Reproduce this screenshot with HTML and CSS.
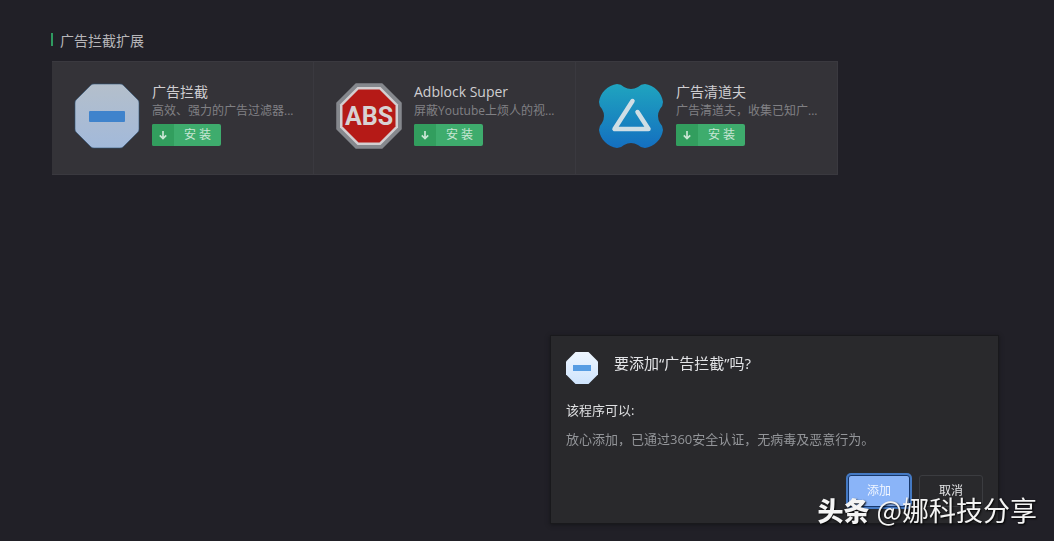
FILE: index.html
```html
<!DOCTYPE html>
<html lang="zh-CN">
<head>
<meta charset="utf-8">
<title>广告拦截扩展</title>
<link rel="stylesheet" href="styles.css">
</head>
<body>
<svg class="defs" aria-hidden="true">
  <defs>
    <linearGradient id="pale" x1="0" y1="0" x2="0" y2="1"><stop offset="0" stop-color="#b4bfcb"/><stop offset="1" stop-color="#a2b9da"/></linearGradient>
    <linearGradient id="bright" x1="0" y1="0" x2="0" y2="1"><stop offset="0" stop-color="#eef6ff"/><stop offset="1" stop-color="#cfe4fd"/></linearGradient>
    <linearGradient id="sea" x1="0" y1="0" x2="0" y2="1"><stop offset="0" stop-color="#1fa4bf"/><stop offset="1" stop-color="#146fc0"/></linearGradient>
    <symbol id="arrow" viewBox="0 0 10 10"><path d="M5 1V8.4M1.8 5.3L5 8.5L8.2 5.3" fill="none" stroke="currentColor" stroke-width="1.7"/></symbol>
  </defs>
</svg>
<main class="page">
  <h1 class="heading">广告拦截扩展</h1>
  <ul class="cards">
    <li class="card">
      <svg class="logo" viewBox="0 0 66 66" aria-hidden="true">
        <path d="M20 1H46Q48 1 49 2L64 17Q65 18 65 20V46Q65 48 64 49L49 64Q48 65 46 65H20Q18 65 17 64L2 49Q1 48 1 46V20Q1 18 2 17L17 2Q18 1 20 1Z" fill="url(#pale)" stroke="#315477" stroke-width=".6"/>
        <rect x="15" y="28" width="36" height="11" rx="1" fill="#3f83cc"/>
      </svg>
      <div class="info">
        <h2 class="name">广告拦截</h2>
        <p class="desc">高效、强力的广告过滤器...</p>
        <button class="install" type="button"><span class="tab"><svg class="arrow"><use href="#arrow"/></svg></span><span class="label">安 装</span></button>
      </div>
    </li>
    <li class="card">
      <svg class="logo" viewBox="0 0 66 66" aria-hidden="true">
        <path d="M20 1H46L65 20V46L46 65H20L1 46V20Z" fill="#85888d" stroke="#85888d" stroke-width="1.5" stroke-linejoin="round"/>
        <path d="M21.500 4H44.500L62 21.500V44.500L44.500 62H21.500L4 44.500V21.500Z" fill="#d3cfd1"/>
        <path d="M22.500 6.500H43.500L59.500 22.500V43.500L43.500 59.500H22.500L6.500 43.500V22.500Z" fill="#b51a17"/>
        <text class="abs" x="33" y="42" text-anchor="middle">ABS</text>
      </svg>
      <div class="info">
        <h2 class="name">Adblock Super</h2>
        <p class="desc">屏蔽Youtube上烦人的视...</p>
        <button class="install" type="button"><span class="tab"><svg class="arrow"><use href="#arrow"/></svg></span><span class="label">安 装</span></button>
      </div>
    </li>
    <li class="card">
      <svg class="logo" viewBox="0 0 66 66" aria-hidden="true">
        <path d="M19 1Q23 1 26 4Q33 8 40 4Q43 1 47 1C56 2 64 10 65 19Q65 23 62 26Q58 33 62 40Q65 43 65 47C64 56 56 64 47 65Q43 65 40 62Q33 58 26 62Q23 65 19 65C10 64 2 56 1 47Q1 43 4 40Q8 33 4 26Q1 23 1 19C2 10 10 2 19 1Z" fill="url(#sea)"/>
        <path d="M34.500 18L16.500 46H50.500L39.500 29" fill="none" stroke="#cfdee5" stroke-width="4.500" stroke-linejoin="round" stroke-linecap="round"/>
      </svg>
      <div class="info">
        <h2 class="name">广告清道夫</h2>
        <p class="desc">广告清道夫，收集已知广...</p>
        <button class="install" type="button"><span class="tab"><svg class="arrow"><use href="#arrow"/></svg></span><span class="label">安 装</span></button>
      </div>
    </li>
  </ul>
</main>
<section class="dialog" role="dialog" aria-labelledby="ask">
  <header class="dialog-head">
    <svg class="dialog-logo" viewBox="0 0 32 32" aria-hidden="true">
      <path d="M9.500 0H22.500L32 9.500V22.500L22.500 32H9.500L0 22.500V9.500Z" fill="url(#bright)"/>
      <rect x="7" y="13" width="18" height="6" fill="#579de3"/>
    </svg>
    <h2 class="dialog-title" id="ask">要添加“广告拦截”吗?</h2>
  </header>
  <h3 class="sub">该程序可以:</h3>
  <p class="note">放心添加，已通过360安全认证，无病毒及恶意行为。</p>
  <div class="actions">
    <button class="btn primary" type="button">添加</button>
    <button class="btn" type="button">取消</button>
  </div>
</section>
<div class="watermark"><strong class="brand">头条</strong><span>@娜科技分享</span></div>
</body>
</html>
```
FILE: styles.css
```css
* { box-sizing: border-box; }
body {
  margin: 0;
  min-height: 100vh;
  background: #212027;
  color: #d0d0d2;
  font-family: "Open Sans", "Noto Sans CJK SC", sans-serif;
}
h1, h2, h3, p, ul { margin: 0; padding: 0; font-weight: 400; }
button { font-family: inherit; padding: 0; cursor: pointer; }
.defs { position: absolute; width: 0; height: 0; }
.page { padding: 31px 52px; }
.heading {
  display: flex;
  align-items: center;
  height: 20px;
  font-size: 14px;
  line-height: 20px;
  color: #b7b6b9;
  margin-bottom: 10px;
}
.heading::before {
  content: "";
  width: 2px;
  height: 13px;
  margin: 0 7px 4px -1px;
  background: #2f9a60;
}
.cards { display: flex; flex-wrap: wrap; list-style: none; }
.card {
  display: flex;
  gap: 12px;
  width: 262px;
  padding: 21px 16px 25px 22px;
  background: #343338;
  border: 1px solid #3a393f;
  border-left-width: 0;
}
.logo { width: 66px; height: 66px; flex: none; }
.abs { font: bold 25px "Roboto", sans-serif; fill: #d8d2d3; }
.info { min-width: 0; }
.name { font-size: 14px; line-height: 18px; color: #cfced1; }
.desc { font-size: 12px; line-height: 20px; color: #808084; white-space: nowrap; margin-bottom: 3px; }
.install {
  display: flex;
  width: 69px;
  height: 22px;
  border: 0;
  border-radius: 2px;
  overflow: hidden;
  background: #3eac6d;
  color: #c8e6d4;
  font-size: 12px;
  line-height: 22px;
}
.tab { display: flex; align-items: center; justify-content: center; width: 22px; height: 22px; background: #329e5e; }
.arrow { width: 10px; height: 10px; }
.label { flex: 1; }
.dialog {
  position: fixed;
  right: 55px;
  bottom: 17px;
  width: 449px;
  padding: 16px 15px;
  background: #29292c;
  border: 1px solid #19191c;
  box-shadow: 0 1px 4px #15151a;
}
.dialog-head { display: flex; gap: 16px; margin-bottom: 16px; }
.dialog-logo { width: 32px; height: 32px; }
.dialog-title { font-size: 15px; line-height: 22px; color: #e3e4e7; }
.sub { font-size: 13px; line-height: 20px; color: #dfe0e2; margin-bottom: 9px; }
.note { font-size: 13px; line-height: 20px; color: #939599; }
.actions { display: flex; justify-content: flex-end; gap: 9px; margin-top: 26px; }
.btn {
  width: 64px;
  height: 32px;
  border: 1px solid #3b3c40;
  border-radius: 3px;
  background: transparent;
  color: #e5e6e8;
  font-size: 12px;
  line-height: 30px;
}
.primary { background: #8ab4f8; border-color: #17376b; color: #f1f6ff; box-shadow: 0 0 0 2px #4479c3; width: 62px; }
.watermark {
  position: fixed;
  right: 17px;
  bottom: 13px;
  display: flex;
  gap: 7px;
  color: #f4f4f4;
  font-family: "Noto Sans CJK SC", sans-serif;
  font-size: 27px;
  line-height: 36px;
  text-shadow: 1px 1px 2px #000;
}
.brand { font-size: 26px; font-weight: 900; }
```
